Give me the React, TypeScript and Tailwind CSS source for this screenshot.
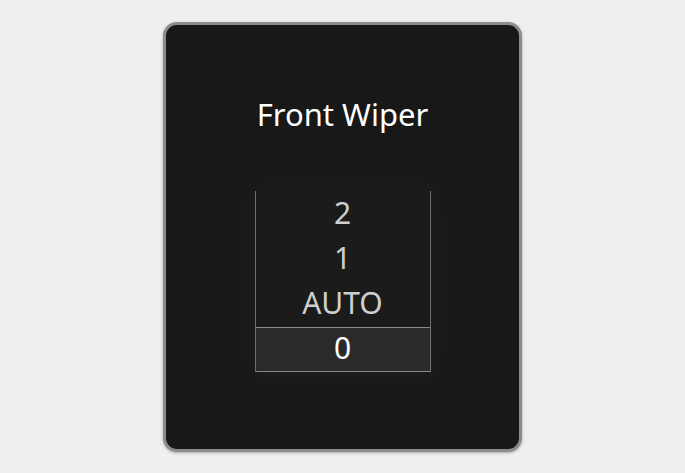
export default function App() {
  const options = ['2', '1', 'AUTO'];
  return (
    <div
      className="flex h-[473px] w-[685px] items-center justify-center bg-[#f0efed]"
      style={{ fontFamily: '"Noto Sans", Roboto, sans-serif' }}
    >
      <div className="flex h-[430px] w-[359px] flex-col items-center rounded-[14px] border-[3px] border-[#8c8c8c] bg-[#181818] shadow-[0_1px_3px_rgba(0,0,0,0.3)]">
        <h1 className="mt-[69px] text-[31px] leading-[40px] text-white">Front Wiper</h1>
        <div className="mt-[57px] flex w-[176px] flex-col border-x border-[#6e6e6e] bg-[#1b1b1b] shadow-[0_0_24px_6px_rgba(36,36,36,0.5)]">
          {options.map((o, i) => (
            <div
              key={o}
              className={`flex items-center justify-center pb-[3px] text-[30px] text-[#cfcfcf] ${i === 0 ? 'h-[46px]' : 'h-[45px]'}`}
            >
              {o}
            </div>
          ))}
          <div className="flex h-[45px] items-center justify-center border-y border-[#8a8a8a] bg-[#2a2a2a] pb-[3px] text-[30px] text-white">
            0
          </div>
        </div>
      </div>
    </div>
  );
}
